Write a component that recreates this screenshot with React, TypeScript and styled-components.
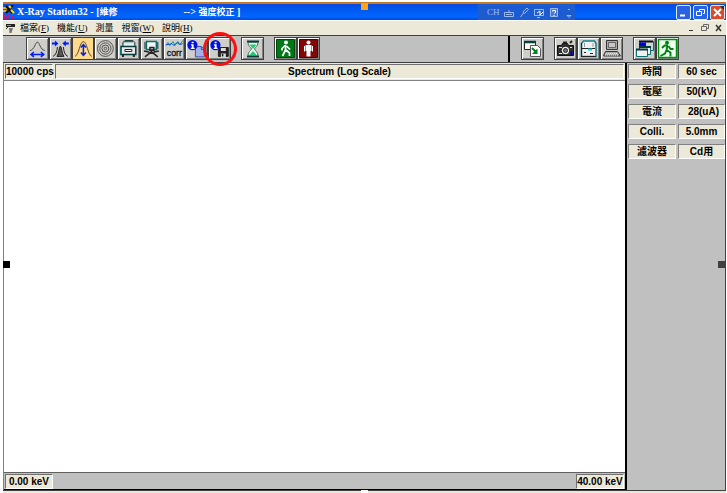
import React from "react";
import styled, { createGlobalStyle, css } from "styled-components";

const GlobalStyle = createGlobalStyle`
  * { box-sizing: border-box; }
  body { margin: 0; background: #fff; }
`;

const UI_FONT = `"Liberation Sans", "Noto Sans CJK TC", sans-serif`;
const SERIF_FONT = `"Liberation Serif", "Noto Sans CJK TC", serif`;
const CREAM = "#ece9d8";
const GRAY = "#c0c0c0";

const Window = styled.div`
  position: relative;
  display: flex;
  flex-direction: column;
  min-height: 100vh;
  padding: 2px 1px 0 3px;
  background: #fff;
  color: #000;
  font-family: ${UI_FONT};
`;

const TitleBar = styled.header`
  display: flex;
  align-items: center;
  height: 18px;
  padding: 0 1px 0 0;
  border-top: 2px solid #c87820;
  background: linear-gradient(#0a4be0, #0058ee 30%, #0066ff 80%, #0048d0);
  color: #fff;
`;

const AppTitle = styled.h1`
  display: flex;
  gap: 66px;
  margin: 0 auto 0 2px;
  font: bold 10px/16px ${SERIF_FONT};
  white-space: pre;
`;

const TitleHan = styled.span`
  font-size: 9px;
`;

const LanguageBar = styled.div`
  display: flex;
  align-items: center;
  gap: 3px;
  height: 16px;
  width: 97px;
  margin-right: 101px;
  padding: 0 0 0 9px;
  background: #1c5bd0;
  color: #9dbaf0;
  font: 9px/16px ${SERIF_FONT};
  svg { flex: none; }
`;

const CaptionButtons = styled.div`
  display: flex;
  gap: 2px;
`;

const CaptionButton = styled.button<{ $close?: boolean }>`
  display: block;
  width: 15px;
  height: 15px;
  padding: 0;
  border: 1px solid #dbe6ff;
  border-radius: 2px;
  background: ${(p) => (p.$close ? "#dc4a28" : "#2a62e4")};
  svg { display: block; }
`;

const MenuBar = styled.nav`
  display: flex;
  align-items: center;
  height: 15px;
  padding: 0 2px 0 2px;
  border-top: 1px solid #fff;
  background: ${CREAM};
`;

const MenuItem = styled.button`
  margin: 0 8px 0 0;
  padding: 0;
  border: 0;
  background: none;
  color: #000;
  font: 9px/13px ${SERIF_FONT};
  white-space: nowrap;
`;

const MenuIcon = styled.svg`
  margin-right: 4px;
`;

const ChildControls = styled.div`
  display: flex;
  gap: 4px;
  margin-left: auto;
`;

const ChildButton = styled.button`
  width: 10px;
  height: 10px;
  padding: 0;
  border: 0;
  background: none;
  svg { display: block; }
`;

const Toolbar = styled.div`
  display: flex;
  height: 28px;
  border: solid #404040;
  border-width: 1px 1px 1px 0;
  background: ${GRAY};
`;

const ToolSection = styled.div<{ $fixed?: boolean }>`
  display: flex;
  gap: 10px;
  padding: 1px 0 0 23px;
  flex: 1;
  ${(p) =>
    p.$fixed &&
    css`
      flex: 0 0 217px;
      padding-left: 11px;
      border-left: 2px solid #000;
    `}
`;

const ToolGroup = styled.div<{ $wide?: boolean }>`
  display: grid;
  grid-auto-flow: column;
  grid-auto-columns: 1fr;
  width: ${(p) => (p.$wide ? "205px" : "auto")};
  height: 23px;
`;

const ToolButton = styled.button<{ $active?: boolean }>`
  min-width: 0;
  height: 23px;
  padding: 0;
  border: 1px solid #404040;
  background: ${(p) => (p.$active ? "#ffd98c" : "#d0cec8")};
  box-shadow: ${(p) =>
    p.$active
      ? "none"
      : "inset 1px 1px 0 #fff, inset -1px -1px 0 #808080"};
  svg { display: block; width: 100%; height: 21px; overflow: visible; }
`;

const Workspace = styled.main`
  display: grid;
  grid-template-columns: 1fr 98px;
  flex: 1;
  border-right: 1px solid #404040;
`;

const SpectrumPane = styled.section`
  display: flex;
  flex-direction: column;
  border-left: 1px solid #808080;
  border-right: 2px solid #000;
  background: #fff;
`;

const PaneRow = styled.div<{ $footer?: boolean }>`
  display: flex;
  justify-content: space-between;
  gap: 2px;
  height: 18px;
  padding: 1px;
  border-bottom: 1px solid ${(p) => (p.$footer ? "#000" : "#808080")};
  border-top: ${(p) => (p.$footer ? "1px solid #606060" : "0")};
  background: ${(p) => (p.$footer ? GRAY : CREAM)};
`;

const Readout = styled.div<{ $grow?: boolean }>`
  flex: ${(p) => (p.$grow ? "1" : "none")};
  width: ${(p) => (p.$grow ? "auto" : "48px")};
  height: 15px;
  border: 1px solid #fff;
  border-top-color: #707070;
  border-left-color: #707070;
  background: ${CREAM};
  font: bold 10px/14px ${UI_FONT};
  text-align: center;
  white-space: nowrap;
`;

const Plot = styled.div`
  flex: 1;
  min-height: 120px;
`;

const SidePanel = styled.aside`
  background: ${GRAY};
  padding: 1px 0 0 1px;
`;

const Settings = styled.table`
  width: 100%;
  border-collapse: separate;
  border-spacing: 0;
  table-layout: fixed;
  font: bold 10px/13px ${UI_FONT};
`;

const NameCell = styled.th`
  width: 50px;
  height: 20px;
  padding: 0;
  vertical-align: top;
  text-align: center;
`;

const ValueCell = styled.td<{ $right?: boolean }>`
  padding: 0;
  vertical-align: top;
  text-align: ${(p) => (p.$right ? "right" : "center")};
`;

const CellBox = styled.div<{ $name?: boolean; $right?: boolean }>`
  height: 15px;
  margin-right: ${(p) => (p.$name ? "2px" : "0")};
  padding-right: ${(p) => (p.$right ? "5px" : "0")};
  border: 1px solid #fff;
  border-top-color: #808080;
  border-left-color: #808080;
  background: ${CREAM};
`;

const BottomEdge = styled.div`
  height: 3px;
  border-top: 1px solid #404040;
  background: ${CREAM};
`;

const Handle = styled.span<{ $place: "top" | "left" | "right" | "bottom" }>`
  position: absolute;
  width: 7px;
  height: 7px;
  ${(p) =>
    ({
      top: css`top: 3px; left: calc(50% - 3px); background: #ffa21c;`,
      left: css`top: calc(50% + 14px); left: 3px; background: #000;`,
      right: css`top: calc(50% + 14px); right: 2px; background: #404040;`,
      bottom: css`bottom: 0; left: calc(50% - 3px); height: 3px; background: #fff;`,
    })[p.$place]}
`;

const Highlight = styled.span`
  position: absolute;
  z-index: 1;
  top: 32px;
  left: 203px;
  width: 34px;
  height: 34px;
  border: 3px solid #f81010;
  border-radius: 50%;
`;

const Icon = ({ children }: { children: React.ReactNode }) => (
  <svg viewBox="0 0 21 21" aria-hidden="true" fill="none" stroke="#222" strokeWidth="1">
    {children}
  </svg>
);

const InfoBadge = () => (
  <g stroke="none">
    <circle cx="6.5" cy="7" r="5.2" fill="#0010e0" />
    <path d="M5.7 3.6h2v1.6h-2zM5 6.2h2.7v3.6h1v1.2H4.8V9.800h1V7.400H5z" fill="#fff" />
  </g>
);

const icons = {
  width: (
    <Icon>
      <path d="M3 12.500C7.500 12 8.500 4 10.500 4S13.500 12 18 12.500" stroke="#444" />
      <path d="M4 16.500h13M7 14l-3 2.500 3 2.500M14 14l3 2.500-3 2.500" stroke="#0020f0" strokeWidth="1.500" />
    </Icon>
  ),
  narrow: (
    <Icon>
      <path d="M3 18.500C6 17 7 14 7.500 9M18 18.500C15 17 14 14 13.500 9" />
      <path d="M7 18.500c2-3 2-9 3.500-10.500 1.500 1.500 1.500 7.500 3.500 10.500z" fill="#555" />
      <path d="M2 5.500h4M19 5.500h-4" stroke="#0020f0" strokeWidth="2" />
      <path d="M5 2.500l3.500 3L5 8.500zM16 2.500l-3.500 3 3.500 3z" fill="#0020f0" stroke="none" />
    </Icon>
  ),
  height: (
    <Icon>
      <path d="M2 18.500C6 17 7 3.500 10.500 3.500S15 17 19 18.500" stroke="#584828" />
      <path d="M10.500 7v10M8 9.500l2.500-3 2.500 3M8 14.500l2.500 3 2.500-3" stroke="#0020f0" strokeWidth="1.500" />
    </Icon>
  ),
  rings: (
    <Icon>
      <g stroke="#505050">
        <circle cx="10.500" cy="10.500" r="8" />
        <circle cx="10.500" cy="10.500" r="5.700" />
        <circle cx="10.500" cy="10.500" r="3.500" />
        <circle cx="10.500" cy="10.500" r="1.300" />
      </g>
    </Icon>
  ),
  chamber: (
    <Icon>
      <path d="M5 9V4.500l2-2h8l2 2V9" fill="#e8e8e8" />
      <path d="M5.500 3.500h10" stroke="#008080" strokeWidth="1.500" />
      <path d="M3 8.500h15v8H3z" fill="#e8e8e8" stroke="#063c3c" strokeWidth="1.500" />
      <path d="M7 11.500h7v2H7z" fill="#fff" />
      <path d="M5 17v2M16 17v2" strokeWidth="2" />
      <path d="M3 9v7" stroke="#008080" />
    </Icon>
  ),
  stage: (
    <Icon>
      <path d="M5.500 3.500h10v8h-10z" fill="#f4f4f4" stroke="#087070" strokeWidth="1.500" />
      <path d="M4 4v7M17 4v7" />
      <path d="M9 9.500h4v3H9zM3 13l5 1M18 13l-5 1M10.500 12v3M9 15l-5 4M12 15l5 4" strokeWidth="1.500" />
      <path d="M8 15h5" strokeWidth="2" />
    </Icon>
  ),
  corr: (
    <Icon>
      <path d="M2 7.500l2-3 2 3 3-4 2 4 3-4 2 3 3-4" stroke="#089898" />
      <path d="M2 6.500h3l3-1 2 2 3-3 3 2 3-1" stroke="#1050e0" />
      <text x="10.500" y="18" textAnchor="middle" fill="#111" stroke="#111" strokeWidth="0.300" fontFamily="Liberation Sans, sans-serif" fontSize="9">corr</text>
    </Icon>
  ),
  infoCopy: (
    <Icon>
      <path d="M9.500 8.500h6l3 3v7.500h-9z" fill="#a4b0e8" stroke="#4050a0" />
      <path d="M15.500 8.500v3h3" stroke="#4050a0" />
      <InfoBadge />
    </Icon>
  ),
  infoSave: (
    <Icon>
      <path d="M9.500 9.500h10v9h-10z" fill="#222" />
      <path d="M12 10h5v3h-5zM12 15.500h5V19h-5z" fill="#ddd" stroke="none" />
      <path d="M13 16h1.500v2.500H13z" fill="#111" stroke="none" />
      <InfoBadge />
    </Icon>
  ),
  hourglass: (
    <Icon>
      <path d="M5 3.500h12M5 18.500h12" stroke="#083c3c" strokeWidth="2" />
      <path d="M6 4.500h10c0 4-3 4.500-3.500 6.500.5 2 3.500 2.500 3.500 6.500H6c0-4 3-4.500 3.500-6.500C9 9 6 8.500 6 4.500z" fill="#f2f8f4" stroke="#407060" />
      <path d="M7.500 6.500h7L11 11zM11 13l4 4.500H7z" fill="#20c870" stroke="none" />
    </Icon>
  ),
  walk: (
    <Icon>
      <path d="M1.500 1.500h18v18h-18z" fill="#007818" stroke="#004808" />
      <circle cx="11" cy="4.500" r="2" fill="#fff" stroke="none" />
      <path d="M10.500 7v5.500M10 7.500L7 10.500v2M11.500 8l3.500 3.500M10.500 12l-3 6M11 12l3.500 3v3" stroke="#fff" strokeWidth="1.700" />
    </Icon>
  ),
  stand: (
    <Icon>
      <path d="M1.500 1.500h18v18h-18z" fill="#800808" stroke="#480000" />
      <circle cx="10.500" cy="4.500" r="2" fill="#fff" stroke="none" />
      <path d="M7.500 7h6v6H12.500v5.500h-4V13h-1z" fill="#fff" stroke="none" />
      <path d="M6.500 8v5.500M14.500 8v5.500" stroke="#fff" />
    </Icon>
  ),
  transfer: (
    <Icon>
      <path d="M2.500 3.500h11v8h-11z" fill="#f8f8f8" />
      <path d="M2 4h12" stroke="#084040" strokeWidth="2.500" />
      <path d="M8.500 7.500h7l3 3v8h-10z" fill="#fff" stroke="#555" />
      <path d="M10 10l4 4" stroke="#008020" strokeWidth="2" />
      <path d="M15.500 10.500v5.500H10z" fill="#008020" stroke="none" />
    </Icon>
  ),
  camera: (
    <Icon>
      <path d="M2.500 7.500h4l1-2h5l1 2h5v10h-16z" fill="#303030" stroke="#101010" />
      <path d="M8 4.500h4M15 5l2-2" strokeWidth="2" />
      <path d="M4 9.500h3M4 15.500h3M15 9.500h2" stroke="#ddd" />
      <circle cx="10.500" cy="12.500" r="4.200" fill="#eee" />
      <circle cx="10.500" cy="12.500" r="2" fill="#777" />
      <path d="M16.500 13v4" stroke="#0000c0" strokeWidth="2" />
    </Icon>
  ),
  instrument: (
    <Icon>
      <path d="M3.500 5.500l2-2.500h11l1.500 2.500v13h-14.500z" fill="#f0f0f0" stroke="#108080" strokeWidth="1.500" />
      <path d="M3.500 5v14M4 10.500h13M3 18.500h15" />
      <path d="M6.500 5v4M15 5v4" stroke="#999" />
      <path d="M10 11.500h4" stroke="#00d8d8" strokeWidth="2" />
      <path d="M6 14.500h2M12 15.500h3" />
    </Icon>
  ),
  computer: (
    <Icon>
      <path d="M5.500 2.500h11v9h-11z" fill="#aaa" stroke="#333" />
      <path d="M7.500 4.500h7v5h-7z" fill="#c8c8c8" stroke="#666" />
      <path d="M4.500 13.500h12l3 4.500h-17z" fill="#aaa" stroke="#333" />
      <path d="M5 15.500h11M4 17h13" stroke="#eee" strokeDasharray="1 1" />
    </Icon>
  ),
  windows: (
    <Icon>
      <path d="M6.500 3.500h13v9h-13z" fill="#c8d8d8" stroke="#087070" />
      <path d="M5 3.500h14" stroke="#111" strokeWidth="2" />
      <path d="M5 4.500h7v5H5z" fill="#0000e0" stroke="none" />
      <path d="M5.500 9.500h11v7h-11z" fill="#f0f0f0" stroke="#087070" />
      <path d="M2.500 11.500h11v7h-11z" fill="#f0f0f0" stroke="#087070" />
      <path d="M2 11.500h12M5 9h12" stroke="#063838" strokeWidth="2" />
    </Icon>
  ),
  exit: (
    <Icon>
      <path d="M1.500 1.500h18v18h-18z" fill="#f0fff0" stroke="#009010" strokeWidth="1.500" />
      <circle cx="10" cy="4.700" r="2" fill="#008010" stroke="none" />
      <path d="M10.500 7.500L9.500 12M11 7.500H7.500L5 10M11.500 8l2 3h3M9.500 12l4 2.500v4M9.500 12L8 15.500 3.500 18" stroke="#008010" strokeWidth="1.900" />
    </Icon>
  ),
};

type IconName = keyof typeof icons;
type Tool = { icon: IconName; label: string; active?: boolean };

const measureTools: Tool[] = [
  { icon: "width", label: "Peak width" },
  { icon: "narrow", label: "Peak narrow" },
  { icon: "height", label: "Peak height", active: true },
  { icon: "rings", label: "Collimator" },
  { icon: "chamber", label: "Chamber" },
  { icon: "stage", label: "Stage" },
  { icon: "corr", label: "Correction" },
  { icon: "infoCopy", label: "Copy information" },
  { icon: "infoSave", label: "Save information" },
];
const runTools: Tool[] = [
  { icon: "walk", label: "Start" },
  { icon: "stand", label: "Stop" },
];
const deviceTools: Tool[] = [
  { icon: "camera", label: "Camera" },
  { icon: "instrument", label: "Instrument" },
  { icon: "computer", label: "Computer" },
];
const windowTools: Tool[] = [
  { icon: "windows", label: "Windows" },
  { icon: "exit", label: "Exit" },
];

const Tools = ({ items, wide }: { items: Tool[]; wide?: boolean }) => (
  <ToolGroup $wide={wide}>
    {items.map((t) => (
      <ToolButton key={t.icon} $active={t.active} aria-label={t.label}>
        {icons[t.icon]}
      </ToolButton>
    ))}
  </ToolGroup>
);

const menus = [
  { text: "檔案", hotkey: "F" },
  { text: "機能", hotkey: "U" },
  { text: "測量" },
  { text: "視窗", hotkey: "W" },
  { text: "說明", hotkey: "H" },
];

const settings = [
  { name: "時間", value: "60 sec" },
  { name: "電壓", value: "50(kV)" },
  { name: "電流", value: "28(uA)", right: true },
  { name: "Colli.", value: "5.0mm" },
  { name: "濾波器", value: "Cd用" },
];

export default function App() {
  return (
    <Window>
      <GlobalStyle />
      <TitleBar>
        <svg width="12" height="15" viewBox="0 0 12 15" fill="none" aria-hidden="true">
          <path d="M0 3h5M0 6h4" stroke="#e8b020" strokeWidth="2" />
          <path d="M3 1l6 7M10 0L3 8" stroke="#101010" strokeWidth="2" />
          <path d="M6 1l2 2M8 5l3 3" stroke="#f0e020" strokeWidth="2" />
          <path d="M0 14v-4h2v2H0l2 2M4 14v-4h2v4M4 12h2M8 10l1.500 2L11 10M9.500 12v2" stroke="#e01060" />
        </svg>
        <AppTitle>
          <span>
            X-Ray Station32 - [<TitleHan>維修</TitleHan>
          </span>
          <span>
            {"--> "}
            <TitleHan>強度校正</TitleHan>
            {" ]"}
          </span>
        </AppTitle>
        <LanguageBar>
          <span>CH</span>
          <svg width="72" height="13" viewBox="0 0 72 13" fill="none" stroke="#9dbaf0" aria-hidden="true">
            <path d="M1.500 6.500h9v4h-9zM3 8.500h6M6 6V4" />
            <path d="M17.500 11l3-4M20 6l4-4 1.500 1.500-4 4z" />
            <path d="M31.500 3.500h9v6h-9zM34 11.500h3" />
            <path d="M34 7l3-2v4l3-3" stroke="#fff" />
            <path d="M47.500 2.500h7v8h-7z" fill="#4878d0" />
            <path d="M49.500 5.500v-1h3v2l-1.500 1M51 9v1" stroke="#fff" />
            <path d="M65 3.500h2M64 9.500h4l-2 2z" />
          </svg>
        </LanguageBar>
        <CaptionButtons>
          <CaptionButton aria-label="Minimize">
            <svg width="13" height="13"><path d="M3 9.500h5" stroke="#fff" strokeWidth="2" /></svg>
          </CaptionButton>
          <CaptionButton aria-label="Restore">
            <svg width="13" height="13" fill="none" stroke="#fff"><path d="M5.500 5V3.500h5v4H9M2.500 5.500h5v4h-5z" /></svg>
          </CaptionButton>
          <CaptionButton $close aria-label="Close">
            <svg width="13" height="13">
              <path d="M3 3l7 7M10 3l-7 7" stroke="#fff" strokeWidth="2" />
              <path d="M9 0h4v4z" fill="#083838" />
            </svg>
          </CaptionButton>
        </CaptionButtons>
      </TitleBar>

      <MenuBar>
        <MenuIcon width="11" height="11" viewBox="0 0 11 11" fill="none" aria-hidden="true">
          <path d="M1 1h9v3H1z" fill="#222" />
          <path d="M2 2.500h4" stroke="#50a0d0" />
          <path d="M4 5h4l-1.500 5h-2z" fill="#777" />
          <path d="M1 6l2-2" stroke="#333" />
        </MenuIcon>
        {menus.map((m) => (
          <MenuItem key={m.text}>
            {m.text}
            {m.hotkey && <>(<u>{m.hotkey}</u>)</>}
          </MenuItem>
        ))}
        <ChildControls>
          <ChildButton aria-label="Minimize child">
            <svg width="10" height="10"><path d="M3 7.500h4" stroke="#333" strokeWidth="1" /></svg>
          </ChildButton>
          <ChildButton aria-label="Restore child">
            <svg width="10" height="10" fill="none" stroke="#666"><path d="M3.500 3V1.500h5v4H7M1.500 3.500h5v4h-5z" /></svg>
          </ChildButton>
          <ChildButton aria-label="Close child">
            <svg width="10" height="10"><path d="M2 2l5 6M7 2L2 8" stroke="#333" strokeWidth="1.500" /></svg>
          </ChildButton>
        </ChildControls>
      </MenuBar>

      <Toolbar>
        <ToolSection>
          <Tools items={measureTools} wide />
          <Tools items={[{ icon: "hourglass", label: "Wait" }]} />
          <Tools items={runTools} />
        </ToolSection>
        <ToolSection $fixed>
          <Tools items={[{ icon: "transfer", label: "Transfer" }]} />
          <Tools items={deviceTools} />
          <Tools items={windowTools} />
        </ToolSection>
      </Toolbar>

      <Workspace>
        <SpectrumPane>
          <PaneRow>
            <Readout>10000 cps</Readout>
            <Readout $grow>Spectrum (Log Scale)</Readout>
          </PaneRow>
          <Plot />
          <PaneRow $footer>
            <Readout>0.00 keV</Readout>
            <Readout>40.00 keV</Readout>
          </PaneRow>
        </SpectrumPane>
        <SidePanel>
          <Settings>
            <tbody>
              {settings.map((s) => (
                <tr key={s.name}>
                  <NameCell scope="row">
                    <CellBox $name>{s.name}</CellBox>
                  </NameCell>
                  <ValueCell $right={s.right}>
                    <CellBox $right={s.right}>{s.value}</CellBox>
                  </ValueCell>
                </tr>
              ))}
            </tbody>
          </Settings>
        </SidePanel>
      </Workspace>
      <BottomEdge />

      <Handle $place="top" />
      <Handle $place="left" />
      <Handle $place="right" />
      <Handle $place="bottom" />
      <Highlight />
    </Window>
  );
}
